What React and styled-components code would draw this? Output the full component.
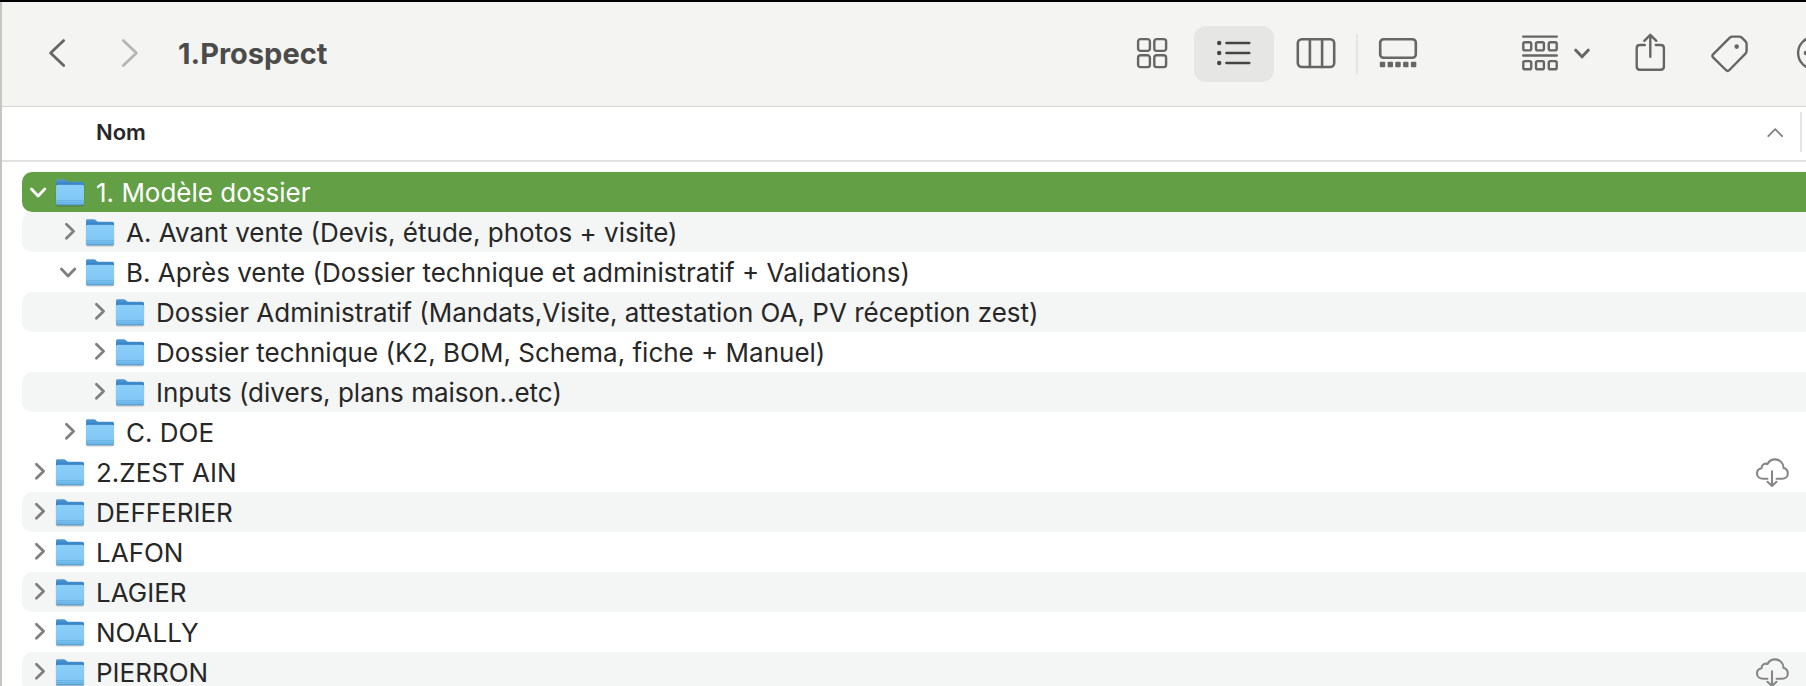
import React, { useState } from 'react';
import styled, { createGlobalStyle } from 'styled-components';

const GlobalStyle = createGlobalStyle`
  * {
    box-sizing: border-box;
  }

  body {
    margin: 0;
    overflow: hidden;
    background-color: #ffffff;
    font-family: Inter, 'Liberation Sans', sans-serif;
  }
`;

const Window = styled.div`
  height: 100vh;
  overflow: hidden;
  background-color: #ffffff;
  border-top: 2px solid #000000;
`;

const WindowBody = styled.div`
  height: 100%;
  overflow: hidden;
  border-left: 2px solid #c6c6c1;
`;

const Toolbar = styled.header`
  display: flex;
  align-items: center;
  height: 105px;
  padding-left: 16px;
  background-color: #f4f4f2;
  border-bottom: 1px solid #d4d4d3;
  color: #666665;
`;

const IconButton = styled.button`
  display: flex;
  flex: none;
  align-items: center;
  justify-content: center;
  gap: 16px;
  width: ${(props) => props.$width || 80}px;
  height: 56px;
  padding: 0 0 2px;
  border: none;
  border-radius: 12px;
  background-color: ${(props) => (props.$active ? '#e6e6e5' : 'transparent')};
  color: ${(props) => (props.$active ? '#444443' : 'inherit')};
  cursor: pointer;

  &:disabled {
    color: #b5b5b4;
    cursor: default;
  }
`;

const Title = styled.h1`
  flex: 1;
  margin: 0 0 0 14px;
  color: #4b4b4a;
  font-size: 29px;
  font-weight: 700;
  line-height: 36px;
`;

const ViewSwitch = styled.div`
  display: flex;
  flex: none;
  align-items: center;
  margin-right: 64px;
`;

const Divider = styled.span`
  width: 2px;
  height: 40px;
  background-color: ${(props) => (props.$visible ? '#e4e4e3' : 'transparent')};
`;

const Actions = styled.div`
  display: flex;
  flex: none;
  margin-right: -52px;
`;

const FileTable = styled.table`
  width: 100%;
  border-spacing: 0;
`;

const HeaderCell = styled.th`
  padding: 0 0 10px;
  text-align: left;
`;

const SortBar = styled.div`
  display: flex;
  align-items: center;
  height: 55px;
  padding: 0 4px 4px 0;
  border-bottom: 2px solid #e2e2e2;
`;

const SortButton = styled.button`
  display: flex;
  flex: 1;
  align-items: center;
  justify-content: space-between;
  padding: 0 17px 0 94px;
  border: none;
  background: none;
  color: #272727;
  font-family: inherit;
  font-size: 22px;
  font-weight: 600;
  line-height: 28px;
  cursor: pointer;
`;

const Cell = styled.td`
  padding: 0 0 0 20px;
`;

const Row = styled.div`
  display: flex;
  align-items: center;
  height: 40px;
  padding: 0 17px 0 ${(props) => 6 + props.$level * 30}px;
  border-radius: 10px 0 0 10px;
  background-color: ${(props) => (props.$striped ? '#f4f5f5' : 'transparent')};
  color: #272727;

  ${(props) => props.$selected && 'background-color: #639f45; color: #ffffff;'}
`;

const Disclosure = styled.button`
  display: flex;
  flex: none;
  width: 24px;
  height: 24px;
  margin-right: 2px;
  padding: 0;
  border: none;
  background: none;
  color: ${(props) => (props.$selected ? '#ffffff' : '#808080')};
  cursor: pointer;
`;

const FileName = styled.span`
  flex: 1;
  padding: 2px 0 0 10px;
  font-size: 26px;
  line-height: 26px;
  white-space: nowrap;
`;

const CloudButton = styled.button`
  display: flex;
  padding: 0;
  border: none;
  background: none;
  color: #868686;
  cursor: pointer;
`;

const Icon = ({ width, height, stroke = 2, children }) => (
  <svg
    width={width}
    height={height}
    viewBox={`0 0 ${width} ${height}`}
    fill="none"
    stroke="currentColor"
    strokeWidth={stroke}
    strokeLinecap="round"
    strokeLinejoin="round"
    aria-hidden="true"
  >
    {children}
  </svg>
);

const BackIcon = () => (
  <Icon width={18} height={32} stroke={2.8}>
    <path d="M15.7 3.6 2.6 16l13.1 12.6" />
  </Icon>
);

const ForwardIcon = () => (
  <Icon width={18} height={32} stroke={2.8}>
    <path d="M2.3 3.6 15.4 16 2.3 28.6" />
  </Icon>
);

const GridIcon = () => (
  <Icon width={32} height={32} stroke={2.4}>
    <rect x="2.1" y="2.1" width="11.8" height="11.8" rx="2.4" />
    <rect x="18.3" y="2.1" width="11.8" height="11.8" rx="2.4" />
    <rect x="2.1" y="18.3" width="11.8" height="11.8" rx="2.4" />
    <rect x="18.3" y="18.3" width="11.8" height="11.8" rx="2.4" />
  </Icon>
);

const ListIcon = () => (
  <Icon width={36} height={28} stroke={2.6}>
    {[4, 14, 24].map((y) => (
      <g key={y}>
        <circle cx="3.2" cy={y} r="2.2" fill="currentColor" stroke="none" />
        <path d={`M10.5 ${y}h22.7`} />
      </g>
    ))}
  </Icon>
);

const ColumnsIcon = () => (
  <Icon width={40} height={32} stroke={2.6}>
    <rect x="1.8" y="2.2" width="36.4" height="27.8" rx="4" />
    <path d="M13.9 2.2V30M26.1 2.2V30" />
  </Icon>
);

const GalleryIcon = () => (
  <Icon width={40} height={32} stroke={2.6}>
    <rect x="2.2" y="2.2" width="35.6" height="18.6" rx="3.4" />
    {[1.8, 9.6, 17.3, 25.1, 32.9].map((x) => (
      <rect key={x} x={x} y="24.8" width="5.4" height="5.4" rx="1" fill="currentColor" stroke="none" />
    ))}
  </Icon>
);

const GroupIcon = () => (
  <Icon width={36} height={36} stroke={2.4}>
    <path d="M1.2 1.6h33.6M1.2 20.5h33.6" />
    {[7.2, 26.1].map((y) =>
      [1.3, 14, 26.8].map((x) => (
        <rect key={`${x}-${y}`} x={x} y={y} width="7.9" height="8.2" rx="1.6" />
      ))
    )}
  </Icon>
);

const ChevronDownIcon = () => (
  <Icon width={16} height={12} stroke={3}>
    <path d="M1.8 3.2 8 9.8l6.2-6.6" />
  </Icon>
);

const ShareIcon = () => (
  <Icon width={32} height={40} stroke={2.4}>
    <path d="M10.8 12H5.9c-2 0-3.2 1.2-3.2 3.2v18.4c0 2 1.2 3.2 3.2 3.2h20.8c2 0 3.2-1.2 3.2-3.2V15.2c0-2-1.2-3.2-3.2-3.2h-4.9" />
    <path d="M16.3 23.7V2M10.3 7.8l6-6 6 6" />
  </Icon>
);

const TagIcon = () => (
  <Icon width={40} height={40} stroke={2.4}>
    <path d="M3.3 21.2 19.8 4.7c.8-.8 1.5-1.1 2.6-1.1h6.8c1.1 0 1.8.3 2.6 1.1l3.7 3.7c.8.8 1.1 1.5 1.1 2.6v7.1c0 1.1-.3 1.8-1.1 2.6L19.4 37c-1.1 1.1-2.4 1.1-3.5 0L3.3 24.7c-1.1-1.1-1.1-2.4 0-3.5Z" />
    <circle cx="26.7" cy="13.6" r="2.3" fill="currentColor" stroke="none" />
  </Icon>
);

const MoreIcon = () => (
  <Icon width={36} height={36} stroke={2.4}>
    <circle cx="18" cy="18" r="15.9" />
    {[10, 18, 26].map((x) => (
      <circle key={x} cx={x} cy="18" r="2.3" fill="currentColor" stroke="none" />
    ))}
  </Icon>
);

const SortIcon = () => (
  <Icon width={16} height={12} stroke={1.8}>
    <path d="m1.3 10.2 6.9-7 6.9 7" stroke="#808080" />
  </Icon>
);

const DisclosureIcon = ({ open }) => (
  <Icon width={24} height={24} stroke={2.8}>
    <path d={open ? 'm3.4 9 6.7 7 6.7-7' : 'M8.4 4.2 15.6 11.2l-7.2 7'} />
  </Icon>
);

const FolderIcon = () => (
  <svg width="32" height="32" viewBox="0 0 32 32" aria-hidden="true">
    <defs>
      <linearGradient id="folder-back" x1="0" y1="0" x2="0" y2="1">
        <stop offset="0" stopColor="#5299cf" />
        <stop offset="0.22" stopColor="#3f8ccb" />
        <stop offset="0.36" stopColor="#2c6fbd" />
        <stop offset="1" stopColor="#2c6fbd" />
      </linearGradient>
      <linearGradient id="folder-front" x1="0" y1="0" x2="0" y2="1">
        <stop offset="0" stopColor="#8bcff9" />
        <stop offset="0.75" stopColor="#82c8f5" />
        <stop offset="1" stopColor="#69b3e4" />
      </linearGradient>
    </defs>
    <rect x="1.8" y="8" width="28.4" height="22.4" rx="1.8" fill="#000000" opacity="0.22" />
    <path
      d="M2 5c0-1.2.7-1.8 1.8-1.8h6c.8 0 1.3.3 1.9.9l1 1c.5.5 1 .7 1.7.7h13.8c1.2 0 1.8.7 1.8 1.8V20H2V5Z"
      fill="url(#folder-back)"
    />
    <path
      d="M2 10.4c0-1 .6-1.6 1.6-1.6h24.8c1 0 1.6.6 1.6 1.6v17.2c0 1-.6 1.6-1.6 1.6H3.6c-1 0-1.6-.6-1.6-1.6V10.4Z"
      fill="url(#folder-front)"
    />
    <path d="M2 24.5h28M2 26.5h28" stroke="#5ba7dc" strokeWidth="0.6" />
    <path d="M2.6 28.7h26.8" stroke="#4a93c8" strokeWidth="0.8" />
  </svg>
);

const CloudIcon = () => (
  <Icon width={34} height={32} stroke={2.1}>
    <path d="M12.5 22.8H8.2c-3.6 0-6.2-2.2-6.2-5.4 0-2.8 1.9-4.8 4.6-5.2-.2-3.1 2.8-5.4 5.9-4.3C14 5.2 16.7 3.4 19.9 3.4c5 0 8.7 3.7 8.7 8.7 2.6.6 4.2 2.7 4.2 5.3 0 3.1-2.4 5.4-5.6 5.4h-5.6" />
    <path d="M17 15.2v14.4M12.5 25.8l4.5 4.2 4.5-4.2" />
  </Icon>
);

const views = [
  { id: 'icons', label: 'Icônes', icon: <GridIcon /> },
  { id: 'list', label: 'Liste', icon: <ListIcon /> },
  { id: 'columns', label: 'Colonnes', icon: <ColumnsIcon /> },
  { id: 'gallery', label: 'Galerie', icon: <GalleryIcon /> },
];

const folders = [
  { name: '1. Modèle dossier', level: 0, open: true },
  { name: 'A. Avant vente (Devis, étude, photos + visite)', level: 1, striped: true },
  { name: 'B. Après vente (Dossier technique et administratif + Validations)', level: 1, open: true },
  {
    name: 'Dossier Administratif (Mandats,Visite, attestation OA, PV réception zest)',
    level: 2,
    striped: true,
  },
  { name: 'Dossier technique (K2, BOM, Schema, fiche + Manuel)', level: 2 },
  { name: 'Inputs (divers, plans maison..etc)', level: 2, striped: true },
  { name: 'C. DOE', level: 1 },
  { name: '2.ZEST AIN', level: 0, cloud: true },
  { name: 'DEFFERIER', level: 0, striped: true },
  { name: 'LAFON', level: 0 },
  { name: 'LAGIER', level: 0, striped: true },
  { name: 'NOALLY', level: 0 },
  { name: 'PIERRON', level: 0, striped: true, cloud: true },
];

const App = () => {
  const [view, setView] = useState('list');
  const [selected, setSelected] = useState('1. Modèle dossier');

  return (
    <>
      <GlobalStyle />
      <Window>
        <WindowBody>
          <Toolbar>
            <IconButton $width={78} aria-label="Précédent">
              <BackIcon />
            </IconButton>
            <IconButton $width={68} aria-label="Suivant" disabled>
              <ForwardIcon />
            </IconButton>
            <Title>1.Prospect</Title>
            <ViewSwitch>
              {views.map((item, index) => (
                <React.Fragment key={item.id}>
                  {index > 0 && <Divider $visible={index === 3} />}
                  <IconButton
                    $active={view === item.id}
                    aria-label={item.label}
                    aria-pressed={view === item.id}
                    onClick={() => setView(item.id)}
                  >
                    {item.icon}
                  </IconButton>
                </React.Fragment>
              ))}
            </ViewSwitch>
            <Actions>
              <IconButton $width={108} aria-label="Grouper">
                <GroupIcon />
                <ChevronDownIcon />
              </IconButton>
              <IconButton aria-label="Partager">
                <ShareIcon />
              </IconButton>
              <IconButton aria-label="Tags">
                <TagIcon />
              </IconButton>
              <IconButton $width={88} aria-label="Plus">
                <MoreIcon />
              </IconButton>
            </Actions>
          </Toolbar>

          <FileTable>
            <thead>
              <tr>
                <HeaderCell aria-sort="ascending">
                  <SortBar>
                    <SortButton>
                      Nom
                      <SortIcon />
                    </SortButton>
                    <Divider $visible />
                  </SortBar>
                </HeaderCell>
              </tr>
            </thead>
            <tbody>
              {folders.map((folder) => (
                <tr key={folder.name} onClick={() => setSelected(folder.name)}>
                  <Cell>
                    <Row
                      $level={folder.level}
                      $striped={folder.striped}
                      $selected={selected === folder.name}
                    >
                      <Disclosure
                        $selected={selected === folder.name}
                        aria-label={folder.name}
                        aria-expanded={Boolean(folder.open)}
                      >
                        <DisclosureIcon open={folder.open} />
                      </Disclosure>
                      <FolderIcon />
                      <FileName>{folder.name}</FileName>
                      {folder.cloud && (
                        <CloudButton aria-label="Télécharger">
                          <CloudIcon />
                        </CloudButton>
                      )}
                    </Row>
                  </Cell>
                </tr>
              ))}
            </tbody>
          </FileTable>
        </WindowBody>
      </Window>
    </>
  );
};

export default App;
